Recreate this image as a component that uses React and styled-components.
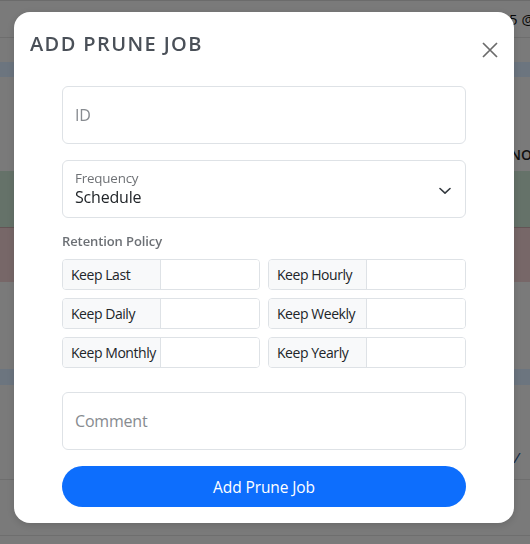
import styled, { createGlobalStyle } from "styled-components";

const GlobalStyle = createGlobalStyle`
    html, body {
        margin: 0;
        padding: 0;
    }
    body {
        font-family: "Open Sans", "Noto Sans", sans-serif;
        color: #212529;
        overflow: hidden;
    }
    * {
        box-sizing: border-box;
    }
`;

const keepFields = [
    "Keep Last",
    "Keep Hourly",
    "Keep Daily",
    "Keep Weekly",
    "Keep Monthly",
    "Keep Yearly",
];

const App = () => {
    return (
        <>
            <GlobalStyle />
            <Page>
                <TopBar>5 @admin</TopBar>
                <Gap $h={24} />
                <Band $color="#d8eafe" $h={15} />
                <Row $h={94}>
                    <HeadText>NOTE</HeadText>
                </Row>
                <Band $color="#cae4d2" $h={56} />
                <Band $color="#eecfd0" $h={55} $line />
                <Gap $h={87} />
                <Band $color="#d8eafe" $h={16} />
                <Row $h={95} $border>
                    <Slash>/</Slash>
                </Row>
                <Gap $h={55} />
                <Line />
            </Page>

            <Backdrop>
                <Modal>
                    <Header>
                        <Title>Add Prune Job</Title>
                        <CloseButton aria-label="Close">
                            <svg width="16" height="16" viewBox="0 0 16 16">
                                <path
                                    d="M1 1L15 15M15 1L1 15"
                                    stroke="#6b6b6b"
                                    strokeWidth="1.7"
                                    fill="none"
                                />
                            </svg>
                        </CloseButton>
                    </Header>
                    <Body>
                        <TextField placeholder="ID" />
                        <SelectBox>
                            <SelectText>
                                <SelectLabel>Frequency</SelectLabel>
                                <SelectValue>Schedule</SelectValue>
                            </SelectText>
                            <svg width="12" height="8" viewBox="0 0 12 8">
                                <path
                                    d="M1 1.5L6 6.2L11 1.5"
                                    stroke="#343a40"
                                    strokeWidth="1.6"
                                    fill="none"
                                    strokeLinecap="round"
                                    strokeLinejoin="round"
                                />
                            </svg>
                        </SelectBox>
                        <SectionLabel>Retention Policy</SectionLabel>
                        <KeepGrid>
                            {keepFields.map((label) => (
                                <InputGroup key={label}>
                                    <Addon>{label}</Addon>
                                    <GroupInput />
                                </InputGroup>
                            ))}
                        </KeepGrid>
                        <TextField placeholder="Comment" $mt={24} />
                        <SubmitButton>Add Prune Job</SubmitButton>
                    </Body>
                </Modal>
            </Backdrop>
        </>
    );
};

/* page behind the dialog */

const Page = styled.div`
    width: 530px;
    height: 544px;
    background: #f4f4f4;
    border-top: 1px solid #d6d6d6;
    overflow: hidden;
    white-space: nowrap;
`;

const TopBar = styled.div`
    height: 37px;
    border-bottom: 1px solid #dcdcdc;
    display: flex;
    align-items: center;
    padding-left: 509px;
    font-size: 15px;
    color: #111;
`;

const Gap = styled.div`
    height: ${(p) => p.$h}px;
`;

const Band = styled.div`
    height: ${(p) => p.$h}px;
    background: ${(p) => p.$color};
    border-top: ${(p) => (p.$line ? "1px solid #c9a9aa" : "none")};
`;

const Row = styled.div`
    height: ${(p) => p.$h}px;
    display: flex;
    align-items: flex-end;
    padding-left: 514px;
    border-bottom: ${(p) => (p.$border ? "1px solid #dcdcdc" : "none")};
`;

const HeadText = styled.span`
    font-size: 14px;
    font-weight: 600;
    color: #222;
    margin-bottom: 7px;
    margin-left: -4px;
`;

const Slash = styled.span`
    font-size: 15px;
    color: #1b4f8a;
    font-style: italic;
    margin-bottom: 12px;
`;

const Line = styled.div`
    border-top: 1px solid #dcdcdc;
`;

/* dialog */

const Backdrop = styled.div`
    position: fixed;
    inset: 0;
    background: rgba(0, 0, 0, 0.5);
    padding: 12px 16px 0 14px;
`;

const Modal = styled.div`
    width: 500px;
    background: #fff;
    border-radius: 16px;
    box-shadow: 0 2px 8px rgba(0, 0, 0, 0.15);
`;

const Header = styled.div`
    display: flex;
    justify-content: space-between;
    align-items: flex-start;
    padding: 19px 16px 0 16px;
`;

const Title = styled.h5`
    margin: 0;
    font-size: 20px;
    line-height: 25px;
    font-weight: 600;
    letter-spacing: 1.4px;
    text-transform: uppercase;
    color: #4a5058;
`;

const CloseButton = styled.button`
    border: 0;
    background: none;
    padding: 0;
    width: 16px;
    height: 16px;
    margin-top: 11px;
    display: flex;
    cursor: pointer;
`;

const Body = styled.div`
    display: flex;
    flex-direction: column;
    padding: 28px 48px 16px;
`;

const TextField = styled.input`
    height: 58px;
    width: 100%;
    border: 1px solid #dee2e6;
    border-radius: 6px;
    padding: 0 12px;
    font-family: inherit;
    font-size: 16px;
    letter-spacing: -0.2px;
    margin-top: ${(p) => p.$mt || 0}px;
    outline: none;

    &::placeholder {
        color: #878b90;
    }
`;

const SelectBox = styled.div`
    height: 58px;
    margin-top: 16px;
    border: 1px solid #dee2e6;
    border-radius: 6px;
    padding: 9px 14px 0 12px;
    display: flex;
    justify-content: space-between;
    align-items: flex-start;

    svg {
        margin-top: 17px;
    }
`;

const SelectText = styled.div`
    display: flex;
    flex-direction: column;
`;

const SelectLabel = styled.span`
    font-size: 13.4px;
    line-height: 16px;
    color: #6f7276;
    letter-spacing: -0.2px;
`;

const SelectValue = styled.span`
    font-size: 16px;
    line-height: 22px;
    color: #212529;
    letter-spacing: -0.2px;
`;

const SectionLabel = styled.div`
    margin-top: 15px;
    font-size: 13px;
    line-height: 16px;
    font-weight: 600;
    color: #6c7075;
    letter-spacing: -0.1px;
`;

const KeepGrid = styled.div`
    margin-top: 10px;
    display: grid;
    grid-template-columns: 1fr 1fr;
    gap: 8px;
`;

const InputGroup = styled.div`
    height: 31px;
    display: flex;
    border: 1px solid #dee2e6;
    border-radius: 4px;
    overflow: hidden;
`;

const Addon = styled.span`
    width: 98px;
    flex-shrink: 0;
    display: flex;
    align-items: center;
    padding-left: 8px;
    background: #f8f9fa;
    border-right: 1px solid #dee2e6;
    font-size: 14px;
    letter-spacing: -0.45px;
    color: #212529;
    white-space: nowrap;
`;

const GroupInput = styled.input`
    flex: 1;
    min-width: 0;
    border: 0;
    outline: none;
    font-family: inherit;
    font-size: 14px;
`;

const SubmitButton = styled.button`
    margin-top: 16px;
    height: 41px;
    border: 0;
    border-radius: 21px;
    background: #0d6efd;
    color: #fff;
    font-family: inherit;
    font-size: 15.5px;
    letter-spacing: -0.1px;
    cursor: pointer;
`;

export default App;
